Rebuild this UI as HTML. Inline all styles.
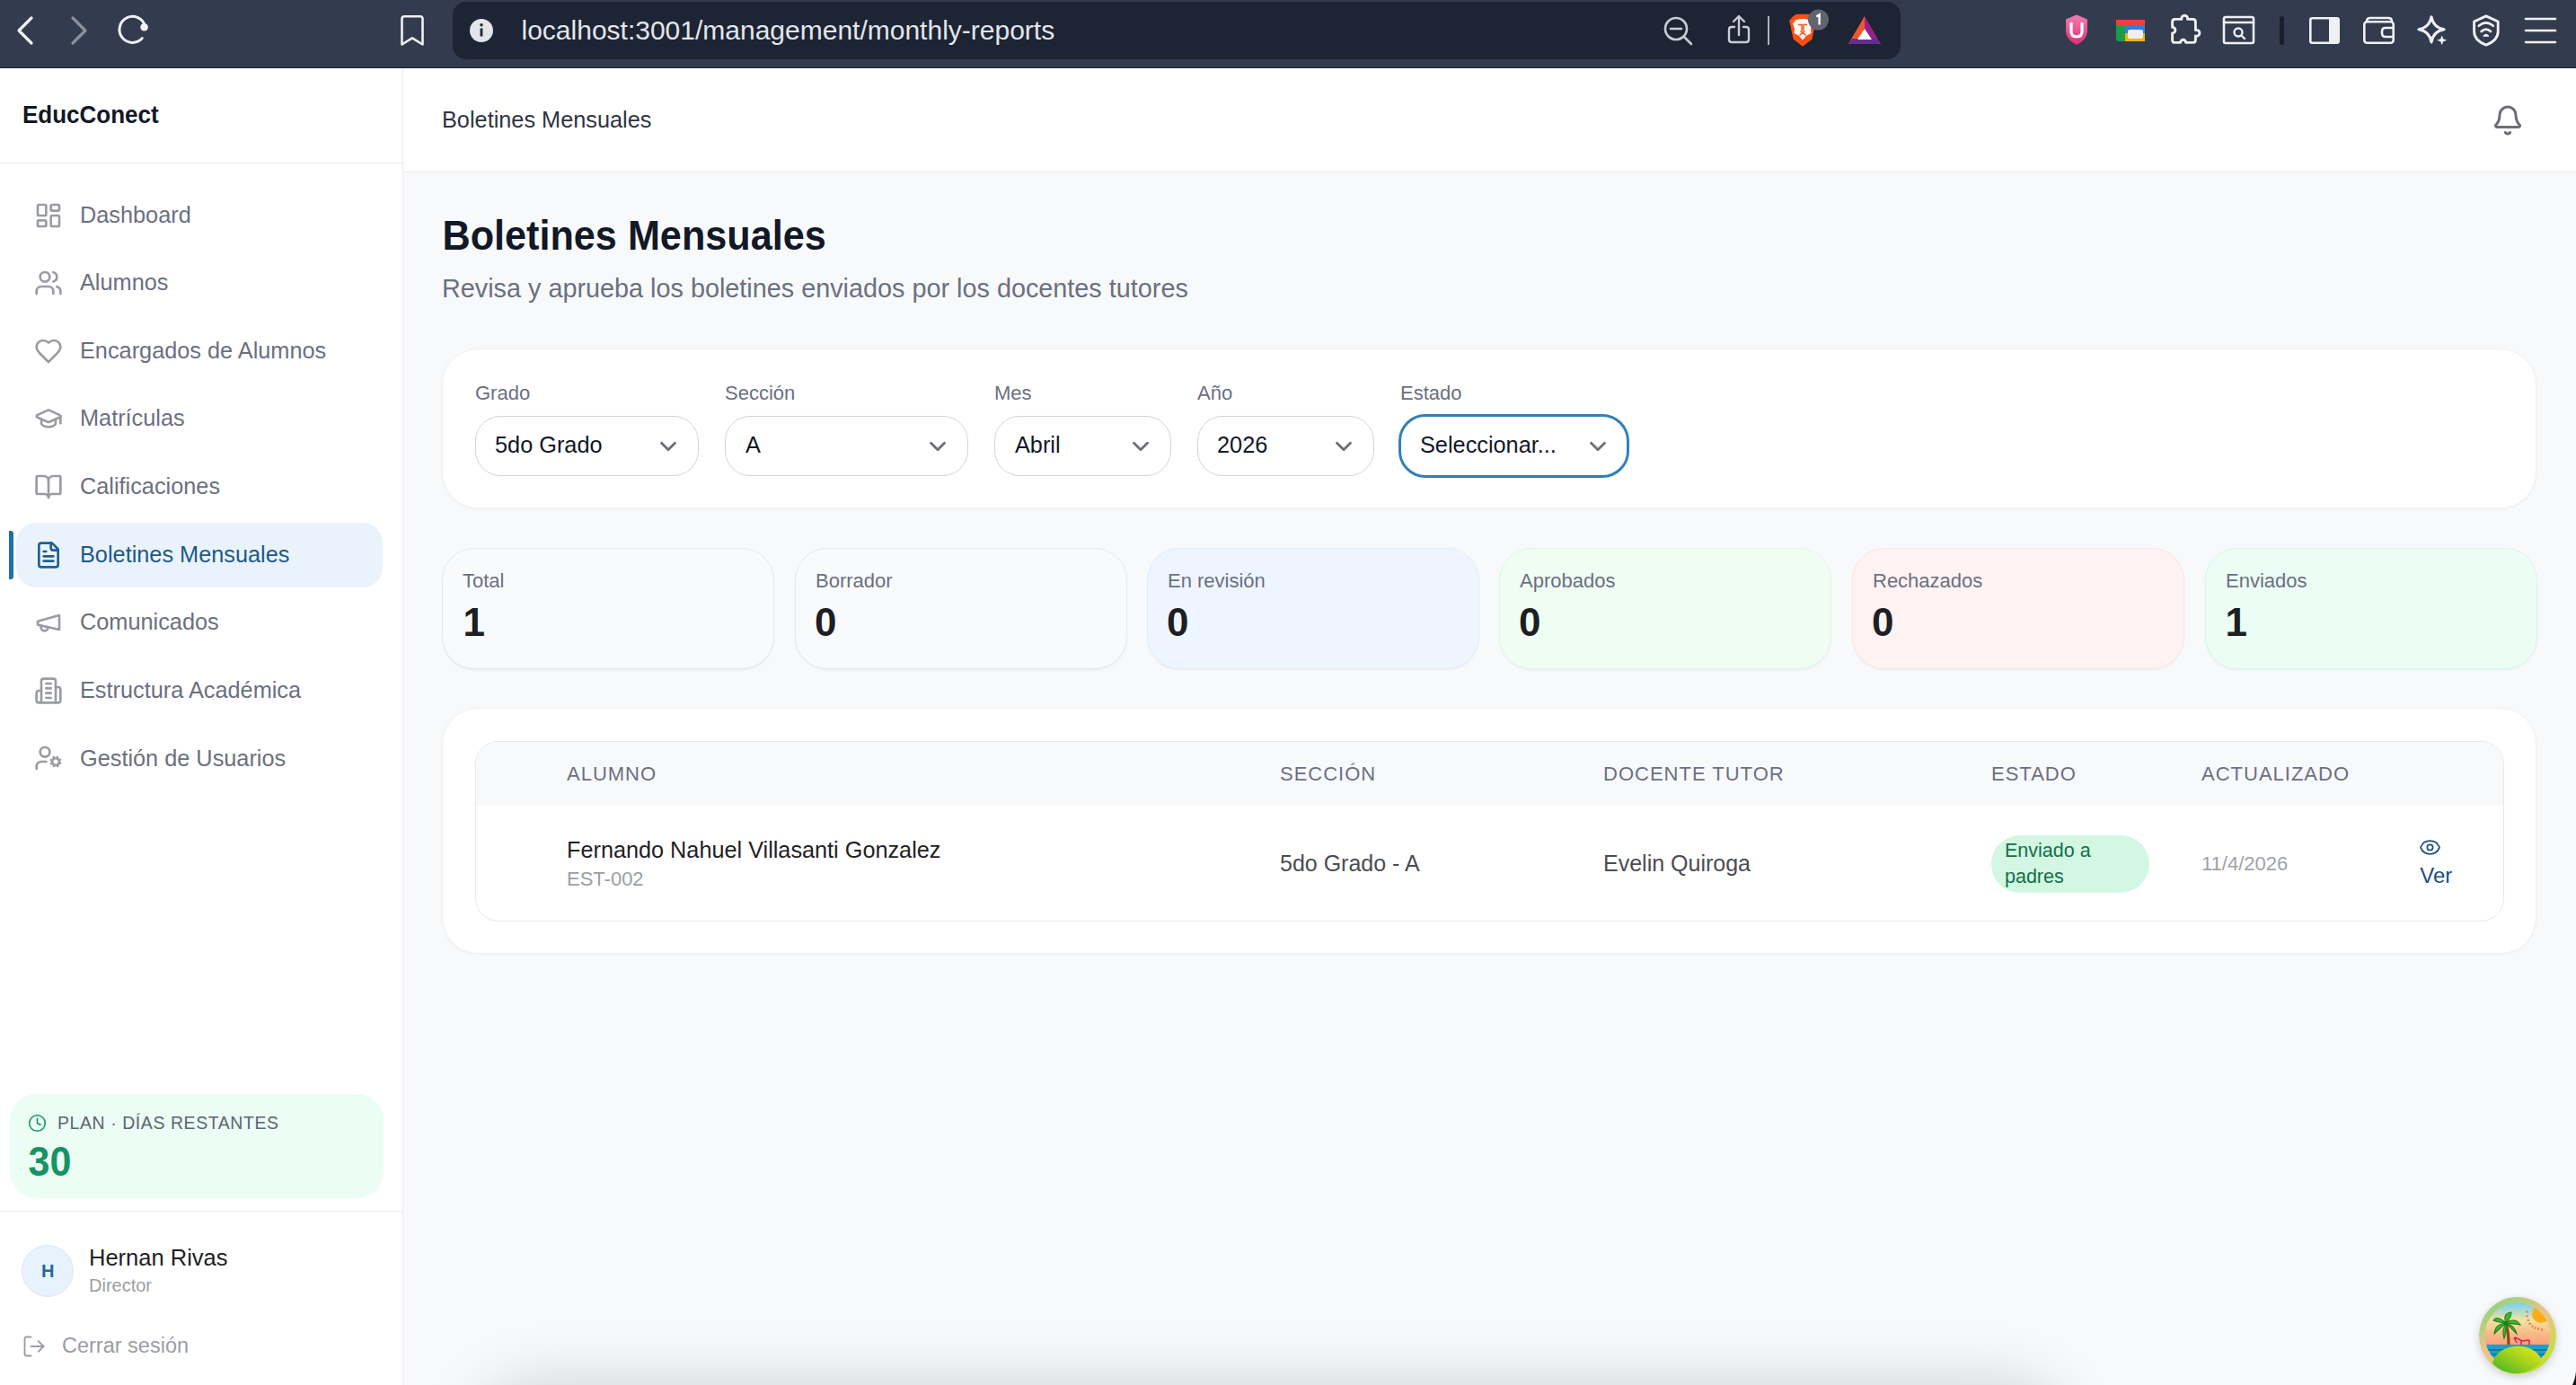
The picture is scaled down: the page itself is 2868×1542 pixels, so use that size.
<!DOCTYPE html>
<html><head><meta charset="utf-8">
<style>
*{box-sizing:border-box;margin:0;padding:0}
html,body{width:2868px;height:1542px;overflow:hidden;background:#f8f9fb;font-family:"Liberation Sans",sans-serif}
.a{position:absolute}
.t{position:absolute;white-space:nowrap;line-height:1}
svg{position:absolute;overflow:visible}
.ic{fill:none;stroke-linecap:round;stroke-linejoin:round}
#toolbar{left:0;top:0;width:2868px;height:76px;background:#333b4e;border-bottom:1.5px solid #1f222b}
#url{left:504px;top:2px;width:1612px;height:64px;background:#1d2434;border-radius:15px}
#sidebar{left:0;top:76px;width:449px;height:1466px;background:#fff;border-right:1px solid #ebebec}
#topbar{left:449px;top:76px;width:2419px;height:116px;background:#fff;border-bottom:1px solid #e9e9eb}
.nav{color:#6b7080;font-size:25.3px}
.card{background:#fff;border-radius:40px;border:1px solid #f0f1f3;box-shadow:0 1px 3px rgba(0,0,0,0.035)}
.sel{position:absolute;top:463px;height:67px;border:1.5px solid #d4d5d8;border-radius:28px;background:#fff}
.lbl{color:#6b7080;font-size:22px;top:426.7px}
.stxt{color:#111827;font-size:25.3px;top:483px}
.stat{position:absolute;top:610px;height:135px;width:370px;border-radius:36px;border:1.5px solid #e6e8ec;background:#f9fafb;box-shadow:0 1.5px 2px rgba(0,0,0,0.035)}
.sl{color:#6b7080;font-size:22px}
.sv{color:#1d1f22;font-size:44px;font-weight:700}
.th{color:#6b7080;font-size:22px;letter-spacing:1.0px;top:851.4px}
</style></head><body>

<!-- ===== Browser toolbar ===== -->
<div id="toolbar" class="a"></div>
<svg style="left:0;top:0" width="200" height="75" class="ic">
  <path d="M35 20 L21 34 L35 48" stroke="#eef0f4" stroke-width="3.2"/>
  <path d="M81 20 L95 34 L81 48" stroke="#8a909c" stroke-width="3.2"/>
  <path d="M158.3 42.6 A14.5 14.5 0 1 1 161.5 29.1" stroke="#eef0f4" stroke-width="3"/>
  <circle cx="160.6" cy="30.2" r="4.3" fill="#eef0f4"/>
</svg>
<svg style="left:440px;top:10px" width="40" height="50" class="ic">
  <path d="M7.5 11 Q7.5 8.3 10.3 8.3 L27.7 8.3 Q30.5 8.3 30.5 11 L30.5 39.5 L19 32.3 L7.5 39.5 Z" stroke="#eef0f4" stroke-width="2.6"/>
</svg>
<div id="url" class="a"></div>
<svg style="left:520px;top:18px" width="32" height="32">
  <circle cx="16" cy="16" r="13" fill="#e3e5ea"/>
  <rect x="14.6" y="13.5" width="2.8" height="9" fill="#1f2533"/>
  <circle cx="16" cy="9.8" r="1.7" fill="#1f2533"/>
</svg>
<div class="t" style="left:580.5px;top:19.3px;font-size:30px;color:#e3e6ec">localhost:3001/management/monthly-reports</div>
<svg style="left:1840px;top:10px" width="60" height="50" class="ic">
  <circle cx="26" cy="22" r="12" stroke="#c9ccd4" stroke-width="2.6"/>
  <path d="M20 22 H32 M35 31 L43 39" stroke="#c9ccd4" stroke-width="2.6"/>
</svg>
<svg style="left:1920px;top:10px" width="40" height="50" class="ic">
  <path d="M11 20 H8 Q5 20 5 23 V34 Q5 37 8 37 H24 Q27 37 27 34 V23 Q27 20 24 20 H21" stroke="#c9ccd4" stroke-width="2.4"/>
  <path d="M16 29 V8 M10 14 L16 8 L22 14" stroke="#c9ccd4" stroke-width="2.4"/>
</svg>
<div class="a" style="left:1968px;top:18px;width:2px;height:32px;background:#aeb2bb"></div>
<svg style="left:1988px;top:10px" width="50" height="50">
  <path d="M12 5.7 H26 L30 8.5 L33.8 13 L32.5 19 L29.5 33.5 L19 41.7 L8.5 33.5 L5.5 19 L4.1 13 L8 8.5 Z" fill="#fa4e14"/>
  <path d="M11 12.5 L16 11 H22 L27 12.5 L30 16.5 L28 22 L28.5 27 L23 30 L19 34.5 L15 30 L9.5 27 L10 22 L8 16.5 Z" fill="#fff6f0"/>
  <path d="M14 17.5 H18 V22.5 Q19 24.5 20 22.5 V17.5 H24 M16.5 24.5 L19 26 L21.5 24.5 M19 26 L15.5 29.5 M19 26 L22.5 29.5" stroke="#f0561c" stroke-width="1.5" fill="none"/>
  <circle cx="36.5" cy="12" r="11.5" fill="#5f646e"/>
  <path d="M34.3 8.6 L37.6 6.4 V17.6" stroke="#fff" stroke-width="2.4" fill="none"/>
</svg>
<svg style="left:2054px;top:14px" width="44" height="40">
  <path d="M22 4 L40 35 H4 Z" fill="#9b1f8a"/>
  <path d="M22 4 L4 35 H14 L22 20 Z" fill="#f15a22"/>
  <path d="M4 35 H40 L36 29 H8 Z" fill="#662d91"/>
  <path d="M22 18 L30 30 H14 Z" fill="#fff"/>
</svg>
<!-- right side extension icons -->
<svg style="left:2290px;top:10px" width="44" height="50">
  <defs><linearGradient id="ug" x1="0" y1="0" x2="0" y2="1"><stop offset="0" stop-color="#f07fae"/><stop offset="1" stop-color="#e22c78"/></linearGradient></defs><path d="M22 6.5 L34 11.5 V24 Q34 34 22 40 Q10 34 10 24 V11.5 Z" fill="url(#ug)"/>
  <path d="M16 15 V25 Q16 31 22 31 Q28 31 28 25 V15" stroke="#fff" stroke-width="3.2" fill="none"/>
</svg>
<svg style="left:2352px;top:14px" width="40" height="40">
  <rect x="4" y="8" width="32" height="24" rx="3" fill="#1a9c4d"/>
  <rect x="4" y="8" width="32" height="7" fill="#e84240"/>
  <rect x="14" y="15" width="22" height="8" fill="#2f7de1"/>
  <rect x="14" y="23" width="22" height="9" fill="#f5b400"/>
  <rect x="17" y="19" width="17" height="10" rx="2" fill="#eceef2"/>
</svg>
<svg style="left:2405px;top:5px" width="55" height="55" class="ic">
  <path d="M13.6 19.4 Q13.6 16.4 16.6 16.4 H23.9 A3.4 3.4 0 1 1 30.5 16.4 H36.4 Q39.4 16.4 39.4 19.4 V28.6 A3.4 3.4 0 1 1 39.4 35 V39.4 Q39.4 42.4 36.4 42.4 H28.7 A3.1 3.1 0 0 0 22.5 42.4 H16.6 Q13.6 42.4 13.6 39.4 V31.9 A3.3 3.3 0 0 0 13.6 25.3 Z" stroke="#eef0f4" stroke-width="2.9"/>
</svg>
<svg style="left:2470px;top:10px" width="50" height="50" class="ic">
  <rect x="6" y="9" width="33" height="29" rx="2" stroke="#eef0f4" stroke-width="2.6"/>
  <path d="M6 15 H39" stroke="#eef0f4" stroke-width="2.6"/>
  <circle cx="22" cy="26" r="4.5" stroke="#eef0f4" stroke-width="2.4"/>
  <path d="M25.5 29.5 L29 33" stroke="#eef0f4" stroke-width="2.4"/>
</svg>
<div class="a" style="left:2538px;top:18px;width:5px;height:32px;background:#1b1f29;border-radius:2px"></div>
<svg style="left:2566px;top:10px" width="50" height="50">
  <rect x="6.3" y="10.3" width="31.4" height="27.4" rx="2" fill="none" stroke="#eef0f4" stroke-width="2.6"/>
  <rect x="27" y="10" width="11" height="28" rx="2" fill="#eef0f4"/>
</svg>
<svg style="left:2626px;top:10px" width="50" height="50" class="ic">
  <path d="M9 14 Q9 10 13 10 H33 Q37 10 37 14" stroke="#eef0f4" stroke-width="2.6"/>
  <rect x="6.3" y="14.3" width="32.4" height="23.4" rx="3" stroke="#eef0f4" stroke-width="2.6"/>
  <path d="M38 21 H30 Q26 21 26 25 V27 Q26 31 30 31 H38" stroke="#eef0f4" stroke-width="2.6"/>
</svg>
<svg style="left:2686px;top:10px" width="50" height="50" class="ic">
  <path d="M21 8.6 Q23 20.8 35.2 22.8 Q23 24.8 21 37 Q19 24.8 6.8 22.8 Q19 20.8 21 8.6 Z" stroke="#eef0f4" stroke-width="2.9"/>
  <path d="M32.7 29.3 L34.2 33.3 L38.2 34.8 L34.2 36.3 L32.7 40.3 L31.2 36.3 L27.2 34.8 L31.2 33.3 Z" fill="#eef0f4"/>
</svg>
<svg style="left:2746px;top:10px" width="50" height="50" class="ic">
  <path d="M21.9 7.9 L35.2 14 V25 Q35.2 35 21.9 40.1 Q8.6 35 8.6 25 V14 Z" stroke="#eef0f4" stroke-width="2.9"/>
  <path d="M13.8 18.8 Q21.8 11.8 29.8 18.8 M16.6 25 Q21.8 20.2 27 25" stroke="#eef0f4" stroke-width="2.6"/>
  <path d="M19 30.2 Q21.8 26.6 24.6 30.2 Z" fill="#eef0f4" stroke="#eef0f4" stroke-width="1.2"/>
</svg>
<svg style="left:2806px;top:10px" width="50" height="50" class="ic">
  <path d="M6 11 H39 M6 24 H39 M6 37 H39" stroke="#eef0f4" stroke-width="2.6"/>
</svg>

<!-- ===== Sidebar ===== -->
<div id="sidebar" class="a"></div>
<div class="a" style="left:0;top:181px;width:448px;height:1px;background:#ebebec"></div>
<div class="t" style="left:25px;top:114.5px;font-size:26px;font-weight:700;color:#111827;transform:scaleY(1.09);transform-origin:0 0.8465em">EducConect</div>

<!-- active item -->
<div class="a" style="left:18px;top:582px;width:408px;height:72px;background:#eaf3fc;border-radius:22px"></div>
<div class="a" style="left:10px;top:591px;width:5px;height:54px;background:#2170a6;border-radius:0 3px 3px 0"></div>

<svg style="left:38px;top:224px" width="32" height="32" viewBox="0 0 24 24" class="ic" stroke="#9a9ca3" stroke-width="2"><rect width="7" height="9" x="3" y="3" rx="1"/><rect width="7" height="5" x="14" y="3" rx="1"/><rect width="7" height="9" x="14" y="12" rx="1"/><rect width="7" height="5" x="3" y="16" rx="1"/></svg>
<div class="t nav" style="left:89px;top:226.6px">Dashboard</div>

<svg style="left:38px;top:299px" width="32" height="32" viewBox="0 0 24 24" class="ic" stroke="#9a9ca3" stroke-width="2"><path d="M16 21v-2a4 4 0 0 0-4-4H6a4 4 0 0 0-4 4v2"/><circle cx="9" cy="7" r="4"/><path d="M22 21v-2a4 4 0 0 0-3-3.87"/><path d="M16 3.13a4 4 0 0 1 0 7.75"/></svg>
<div class="t nav" style="left:89px;top:302.1px">Alumnos</div>

<svg style="left:38px;top:375px" width="32" height="32" viewBox="0 0 24 24" class="ic" stroke="#9a9ca3" stroke-width="2"><path d="M19 14c1.49-1.46 3-3.21 3-5.5A5.5 5.5 0 0 0 16.5 3c-1.76 0-3 .5-4.5 2-1.5-1.5-2.74-2-4.5-2A5.5 5.5 0 0 0 2 8.5c0 2.3 1.5 4.05 3 5.5l7 7Z"/></svg>
<div class="t nav" style="left:89px;top:377.6px">Encargados de Alumnos</div>

<svg style="left:38px;top:450px" width="32" height="32" viewBox="0 0 24 24" class="ic" stroke="#9a9ca3" stroke-width="2"><path d="M21.42 10.922a1 1 0 0 0-.019-1.838L12.83 5.18a2 2 0 0 0-1.66 0L2.6 9.08a1 1 0 0 0 0 1.832l8.57 3.908a2 2 0 0 0 1.66 0z"/><path d="M22 10v6"/><path d="M6 12.5V16a6 3 0 0 0 12 0v-3.5"/></svg>
<div class="t nav" style="left:89px;top:453.1px">Matrículas</div>

<svg style="left:38px;top:526px" width="32" height="32" viewBox="0 0 24 24" class="ic" stroke="#9a9ca3" stroke-width="2"><path d="M12 7v14"/><path d="M3 18a1 1 0 0 1-1-1V4a1 1 0 0 1 1-1h5a4 4 0 0 1 4 4 4 4 0 0 1 4-4h5a1 1 0 0 1 1 1v13a1 1 0 0 1-1 1h-6a3 3 0 0 0-3 3 3 3 0 0 0-3-3z"/></svg>
<div class="t nav" style="left:89px;top:528.6px">Calificaciones</div>

<svg style="left:38px;top:602px" width="32" height="32" viewBox="0 0 24 24" class="ic" stroke="#1f5f8f" stroke-width="2"><path d="M15 2H6a2 2 0 0 0-2 2v16a2 2 0 0 0 2 2h12a2 2 0 0 0 2-2V7Z"/><path d="M14 2v4a2 2 0 0 0 2 2h4"/><path d="M10 9H8"/><path d="M16 13H8"/><path d="M16 17H8"/></svg>
<div class="t nav" style="left:89px;top:605.2px;color:#1d5a8a">Boletines Mensuales</div>

<svg style="left:38px;top:677px" width="32" height="32" viewBox="0 0 24 24" class="ic" stroke="#9a9ca3" stroke-width="2"><path d="m3 11 18-5v12L3 14v-3z"/><path d="M11.6 16.8a3 3 0 1 1-5.8-1.6"/></svg>
<div class="t nav" style="left:89px;top:679.6px">Comunicados</div>

<svg style="left:38px;top:753px" width="32" height="32" viewBox="0 0 24 24" class="ic" stroke="#9a9ca3" stroke-width="2"><path d="M6 22V4a2 2 0 0 1 2-2h8a2 2 0 0 1 2 2v18Z"/><path d="M6 12H4a2 2 0 0 0-2 2v6a2 2 0 0 0 2 2h2"/><path d="M18 9h2a2 2 0 0 1 2 2v9a2 2 0 0 1-2 2h-2"/><path d="M10 6h4"/><path d="M10 10h4"/><path d="M10 14h4"/><path d="M10 18h4"/></svg>
<div class="t nav" style="left:89px;top:755.6px">Estructura Académica</div>

<svg style="left:38px;top:828px" width="32" height="32" viewBox="0 0 24 24" class="ic" stroke="#9a9ca3" stroke-width="2"><circle cx="18" cy="15" r="3"/><circle cx="9" cy="7" r="4"/><path d="M10 15H6a4 4 0 0 0-4 4v2"/><path d="m21.7 16.4-.9-.3"/><path d="m15.2 13.9-.9-.3"/><path d="m16.6 18.7.3-.9"/><path d="m19.1 12.2.3-.9"/><path d="m19.6 18.7-.4-1"/><path d="m16.8 12.3-.4-1"/><path d="m14.3 16.6 1-.4"/><path d="m20.7 13.8 1-.4"/></svg>
<div class="t nav" style="left:89px;top:831.6px">Gestión de Usuarios</div>

<!-- plan card -->
<div class="a" style="left:11px;top:1218px;width:416px;height:116px;background:#ebfdf4;border-radius:30px"></div>
<svg style="left:31.2px;top:1240.2px" width="21" height="21" viewBox="0 0 24 24" class="ic" stroke="#139463" stroke-width="1.8"><circle cx="12" cy="12" r="10"/><path d="M12 6v6l4 2"/></svg>
<div class="t" style="left:64px;top:1241px;font-size:19.5px;letter-spacing:0.56px;color:#5c6570">PLAN · DÍAS RESTANTES</div>
<div class="t" style="left:31.5px;top:1273.2px;font-size:43px;font-weight:700;color:#159463;transform:scaleY(1.083);transform-origin:0 0.8465em">30</div>
<div class="a" style="left:0;top:1348px;width:448px;height:1px;background:#ebebec"></div>

<!-- user -->
<div class="a" style="left:24px;top:1386px;width:58px;height:58px;border-radius:50%;background:#e8f2fc;border:1px solid #dde8f3"></div>
<div class="t" style="left:46px;top:1404.7px;font-size:20px;font-weight:700;color:#1e6aa5">H</div>
<div class="t" style="left:99px;top:1387.9px;font-size:25.5px;color:#1f2125">Hernan Rivas</div>
<div class="t" style="left:99px;top:1421.3px;font-size:20px;color:#9b9ea4">Director</div>
<svg style="left:24px;top:1484.5px" width="28" height="28" viewBox="0 0 24 24" class="ic" stroke="#9b9ea4" stroke-width="1.6"><path d="M9 21H5a2 2 0 0 1-2-2V5a2 2 0 0 1 2-2h4"/><path d="m16 17 5-5-5-5"/><path d="M21 12H9"/></svg>
<div class="t" style="left:69px;top:1487.1px;font-size:23.5px;color:#9b9ea4">Cerrar sesión</div>

<!-- ===== Top bar ===== -->
<div id="topbar" class="a"></div>
<div class="t" style="left:492px;top:121px;font-size:25.3px;color:#2f3440">Boletines Mensuales</div>
<svg style="left:2773.85px;top:115.85px" width="36" height="36" viewBox="0 0 24 24" class="ic" stroke="#6b6e78" stroke-width="2"><path d="M10.268 21a2 2 0 0 0 3.464 0"/><path d="M3.262 15.326A1 1 0 0 0 4 17h16a1 1 0 0 0 .74-1.673C19.41 13.956 18 12.499 18 8A6 6 0 0 0 6 8c0 4.499-1.411 5.956-2.738 7.326"/></svg>

<!-- ===== Main ===== -->
<div class="t" style="left:492.5px;top:242px;font-size:43.2px;font-weight:700;color:#111827;transform:scaleY(1.065);transform-origin:0 0.8465em">Boletines Mensuales</div>
<div class="t" style="left:492px;top:307px;font-size:28.8px;color:#6b7080">Revisa y aprueba los boletines enviados por los docentes tutores</div>

<!-- filters -->
<div class="a card" style="left:492px;top:388px;width:2332px;height:178px"></div>
<div class="t lbl" style="left:529px">Grado</div>
<div class="t lbl" style="left:807px">Sección</div>
<div class="t lbl" style="left:1107px">Mes</div>
<div class="t lbl" style="left:1333px">Año</div>
<div class="t lbl" style="left:1559px">Estado</div>

<div class="sel" style="left:529px;width:249px"></div>
<div class="sel" style="left:807px;width:271px"></div>
<div class="sel" style="left:1107px;width:197px"></div>
<div class="sel" style="left:1333px;width:197px"></div>
<div class="sel" style="left:1557px;width:257px;top:461px;height:70.5px;border:3.2px solid #3180bc;border-radius:30px"></div>

<div class="t stxt" style="left:551px">5do Grado</div>
<div class="t stxt" style="left:830px">A</div>
<div class="t stxt" style="left:1130px">Abril</div>
<div class="t stxt" style="left:1355px">2026</div>
<div class="t stxt" style="left:1581px">Seleccionar...</div>

<svg style="left:728.9px;top:482px" width="30" height="30" viewBox="0 0 24 24" class="ic" stroke="#6b6e75" stroke-width="2.2"><path d="m6 9 6 6 6-6"/></svg>
<svg style="left:1028.7px;top:482px" width="30" height="30" viewBox="0 0 24 24" class="ic" stroke="#6b6e75" stroke-width="2.2"><path d="m6 9 6 6 6-6"/></svg>
<svg style="left:1254.9px;top:482px" width="30" height="30" viewBox="0 0 24 24" class="ic" stroke="#6b6e75" stroke-width="2.2"><path d="m6 9 6 6 6-6"/></svg>
<svg style="left:1480.6px;top:482px" width="30" height="30" viewBox="0 0 24 24" class="ic" stroke="#6b6e75" stroke-width="2.2"><path d="m6 9 6 6 6-6"/></svg>
<svg style="left:1763.8px;top:482px" width="30" height="30" viewBox="0 0 24 24" class="ic" stroke="#6b6e75" stroke-width="2.2"><path d="m6 9 6 6 6-6"/></svg>

<!-- stats -->
<div class="stat" style="left:492px"></div>
<div class="stat" style="left:885px"></div>
<div class="stat" style="left:1277px;background:#eef5fe;border-color:#e0ecfb"></div>
<div class="stat" style="left:1669px;background:#effdf3;border-color:#e0f7e7"></div>
<div class="stat" style="left:2062px;background:#fef2f2;border-color:#fbe4e4"></div>
<div class="stat" style="left:2455px;background:#ebfdf5;border-color:#d9f5e8"></div>

<div class="t sl" style="left:515px;top:635.7px">Total</div>
<div class="t sl" style="left:908px;top:635.7px">Borrador</div>
<div class="t sl" style="left:1300px;top:635.7px">En revisión</div>
<div class="t sl" style="left:1692px;top:635.7px">Aprobados</div>
<div class="t sl" style="left:2085px;top:635.7px">Rechazados</div>
<div class="t sl" style="left:2478px;top:635.7px">Enviados</div>

<div class="t sv" style="left:515.5px;top:671px">1</div>
<div class="t sv" style="left:907px;top:671px">0</div>
<div class="t sv" style="left:1299px;top:671px">0</div>
<div class="t sv" style="left:1691px;top:671px">0</div>
<div class="t sv" style="left:2084px;top:671px">0</div>
<div class="t sv" style="left:2477.5px;top:671px">1</div>

<!-- table card -->
<div class="a card" style="left:492px;top:788px;width:2332px;height:274px"></div>
<div class="a" style="left:529px;top:825px;width:2259px;height:201px;border:1.5px solid #e6e8ec;border-radius:26px;overflow:hidden;background:#fff">
  <div class="a" style="left:0;top:0;width:100%;height:71px;background:#f8f9fb"></div>
</div>
<div class="t th" style="left:631px">ALUMNO</div>
<div class="t th" style="left:1425px">SECCIÓN</div>
<div class="t th" style="left:1785px">DOCENTE TUTOR</div>
<div class="t th" style="left:2217px">ESTADO</div>
<div class="t th" style="left:2451px">ACTUALIZADO</div>

<div class="t" style="left:631px;top:934.1px;font-size:25.25px;color:#1f2125">Fernando Nahuel Villasanti Gonzalez</div>
<div class="t" style="left:631px;top:967.9px;font-size:22px;color:#9b9ea4">EST-002</div>
<div class="t" style="left:1425px;top:948.5px;font-size:25px;color:#4b4d52">5do Grado - A</div>
<div class="t" style="left:1785px;top:948.5px;font-size:25px;color:#4b4d52">Evelin Quiroga</div>

<div class="a" style="left:2217px;top:930px;width:176px;height:64px;border-radius:32px;background:#d2f7e2"></div>
<div class="t" style="left:2232px;top:932.6px;font-size:21.5px;line-height:29px;color:#137049;white-space:normal;width:150px">Enviado a padres</div>

<div class="t" style="left:2451px;top:951.1px;font-size:22px;color:#a0a3a8">11/4/2026</div>

<svg style="left:2693px;top:931px" width="25" height="25" viewBox="0 0 24 24" class="ic" stroke="#1c5080" stroke-width="1.7"><path d="M2.062 12.348a1 1 0 0 1 0-.696 10.75 10.75 0 0 1 19.876 0 1 1 0 0 1 0 .696 10.75 10.75 0 0 1-19.876 0"/><circle cx="12" cy="12" r="3"/></svg>
<div class="t" style="left:2694.3px;top:962.5px;font-size:24px;color:#1c5080">Ver</div>

<!-- bottom shadow -->
<div class="a" style="left:570px;top:1580px;width:1690px;height:60px;border-radius:30px;box-shadow:0 0 70px 40px rgba(0,0,0,0.16)"></div>

<!-- floating avatar -->
<div class="a" style="left:2760px;top:1444px;width:86px;height:86px;border-radius:50%;box-shadow:0 3px 10px rgba(0,0,0,0.18)"></div>
<svg style="left:2760px;top:1444px" width="86" height="86" viewBox="0 0 86 86">
  <defs>
    <linearGradient id="ring" x1="0.1" y1="0.1" x2="0.7" y2="1"><stop offset="0" stop-color="#8fd57a"/><stop offset="0.45" stop-color="#eec38c"/><stop offset="0.8" stop-color="#cfd658"/><stop offset="1" stop-color="#bde022"/></linearGradient>
    <linearGradient id="sky" x1="0" y1="0" x2="0" y2="1"><stop offset="0.08" stop-color="#76d2f2"/><stop offset="0.3" stop-color="#f3e2a0"/><stop offset="0.45" stop-color="#f8c08a"/><stop offset="0.65" stop-color="#fb9a78"/></linearGradient>
    <linearGradient id="hill" x1="0" y1="1" x2="1" y2="0"><stop offset="0" stop-color="#3faf2c"/><stop offset="0.55" stop-color="#a6d41c"/><stop offset="1" stop-color="#f0e814"/></linearGradient>
    <clipPath id="cc"><circle cx="43" cy="43" r="36.5"/></clipPath>
  </defs>
  <circle cx="43" cy="43" r="43" fill="url(#ring)"/>
  <g clip-path="url(#cc)">
    <rect x="0" y="0" width="86" height="86" fill="url(#sky)"/>
    <circle cx="69" cy="19" r="10" fill="#f9ae1a"/>
    <g stroke="#f0663a" stroke-width="1.5" stroke-linecap="round">
      <path d="M53 16 l1 1"/><path d="M53 21 l1 0.5"/><path d="M54 26 l1.5 0"/><path d="M56 30 l1.5 -0.5"/><path d="M59 33 l1 -1"/><path d="M62 35 l1 -1"/><path d="M66 36 l0.5 -1.5"/><path d="M70 37 l0 -1.5"/>
    </g>
    <rect x="0" y="53" width="86" height="20" fill="#1aa0c6"/>
    <path d="M0 59 H86 M0 64 H86" stroke="#0e6f96" stroke-width="1.6"/>
    <path d="M39 45 L42 51 M40 45 L48 49 L56 48 M47 49 L47 53 M56 48 L56 53" stroke="#d8245a" stroke-width="1.6" fill="none"/>
  </g>
  <path d="M15 74 C20 50 62 48 70 71 A36.5 36.5 0 0 1 15 74 Z" fill="url(#hill)"/>
  <g clip-path="url(#cc)">
    <path d="M33 53 Q33 40 30 29" stroke="#8a4b1c" stroke-width="3.2" fill="none"/>
    <g fill="#43b834" stroke="#1f7e18" stroke-width="1.1">
      <path d="M30 29 Q20 20 16 26 Q20 28 30 29Z"/>
      <path d="M30 29 Q26 18 36 17 Q36 22 30 29Z"/>
      <path d="M30 29 Q40 22 46 31 Q40 30 30 29Z"/>
      <path d="M30 29 Q18 30 17 41 Q22 36 30 29Z"/>
      <path d="M30 29 Q25 38 28 46 Q31 38 30 29Z"/>
      <path d="M30 29 Q40 32 42 41 Q36 35 30 29Z"/>
    </g>
  </g>
</svg>

<svg style="left:2856px;top:1520px" width="12" height="22"><path d="M12 7 Q11 16 8 22 H12 Z" fill="#111"/></svg>
</body></html>
